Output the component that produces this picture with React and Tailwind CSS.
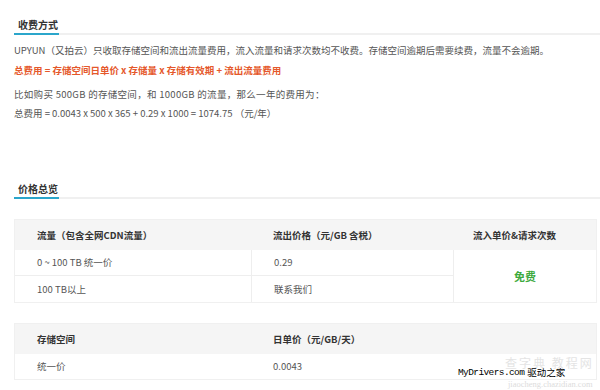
const SectionTitle = ({ title }) => (
  <div className="flex border-b-2 border-[#f0f0f0]">
    <div className="w-[45px] -mb-[2px] border-b-2 border-[#2ba6cb] pl-[4px] pb-[1px] text-[10px] leading-[14px] font-bold text-[#333]">
      {title}
    </div>
  </div>
)

const App = () => {
  return (
    <div className="relative w-[600px] h-[390px] overflow-hidden bg-white font-['Noto_Sans_CJK_SC','Noto_Sans',sans-serif] text-[9.5px] text-[#555]">
      <div className="pl-[14px] pt-[18px]">
        {/* 收费方式 */}
        <SectionTitle title="收费方式" />
        <div className="mt-[5px] leading-[20px]">
          <p>UPYUN（又拍云）只收取存储空间和流出流量费用，流入流量和请求次数均不收费。存储空间逾期后需要续费，流量不会逾期。</p>
          <p className="font-bold text-[#e5582b]">总费用 = 存储空间日单价 x 存储量 x 存储有效期 + 流出流量费用</p>
        </div>
        <div className="mt-[5px] leading-[19px]">
          <p className="tracking-[0.3px]">比如购买 500GB 的存储空间，和 1000GB 的流量，那么一年的费用为：</p>
          <p>总费用 = 0.0043 x 500 x 365 + 0.29 x 1000 = 1074.75 （元/年）</p>
        </div>

        {/* 价格总览 */}
        <div className="mt-[59px]">
          <SectionTitle title="价格总览" />
        </div>

        <div className="mt-[20px] w-[583px] border border-[#f0f0f0]">
          <div className="grid grid-cols-[236px_202px_1fr] h-[30px] items-center bg-[#f5f5f5] font-bold text-[#333]">
            <div className="pl-[22px]">流量（包含全网CDN流量）</div>
            <div className="pl-[22px]">流出价格（元/GB 含税）</div>
            <div className="pl-[20px]">流入单价&amp;请求次数</div>
          </div>
          <div className="grid grid-cols-[236px_202px_1fr] grid-rows-[26px_26px]">
            <div className="flex items-center pl-[22px] border-b border-[#eee]">0 ~ 100 TB 统一价</div>
            <div className="flex items-center pl-[22px] border-b border-l border-[#eee]">0.29</div>
            <div className="row-span-2 flex items-center justify-center border-l border-[#eee] text-[11px] font-bold text-[#3daa3d]">免费</div>
            <div className="flex items-center pl-[22px]">100 TB以上</div>
            <div className="flex items-center pl-[22px] border-l border-[#eee]">联系我们</div>
          </div>
        </div>

        <div className="mt-[20px] w-[583px] border border-[#f0f0f0]">
          <div className="grid grid-cols-[236px_1fr] h-[30px] items-center bg-[#f5f5f5] font-bold text-[#333]">
            <div className="pl-[22px]">存储空间</div>
            <div className="pl-[22px]">日单价（元/GB/天）</div>
          </div>
          <div className="grid grid-cols-[236px_1fr] h-[25px] items-center">
            <div className="pl-[22px]">统一价</div>
            <div className="pl-[22px]">0.0043</div>
          </div>
        </div>
      </div>

      {/* watermark */}
      <div className="absolute left-[505px] top-[356px] whitespace-nowrap text-[12px] leading-[14px] tracking-[2px] text-[#e4e4e4]">查字典 教程网</div>
      <div className="absolute left-[458px] top-[367px] flex items-center whitespace-nowrap text-[9.5px] leading-[11px] text-black">
        <span className="font-['Liberation_Mono',monospace] tracking-[-0.6px]">MyDrivers.com</span>
        <span className="ml-[3px]">驱动之家</span>
      </div>
      <div className="absolute left-[508px] top-[379px] whitespace-nowrap font-['Liberation_Serif',serif] text-[8.5px] leading-[10px] text-[#dcdcdc]">jiaocheng.chazidian.com</div>
    </div>
  )
}

export default App
